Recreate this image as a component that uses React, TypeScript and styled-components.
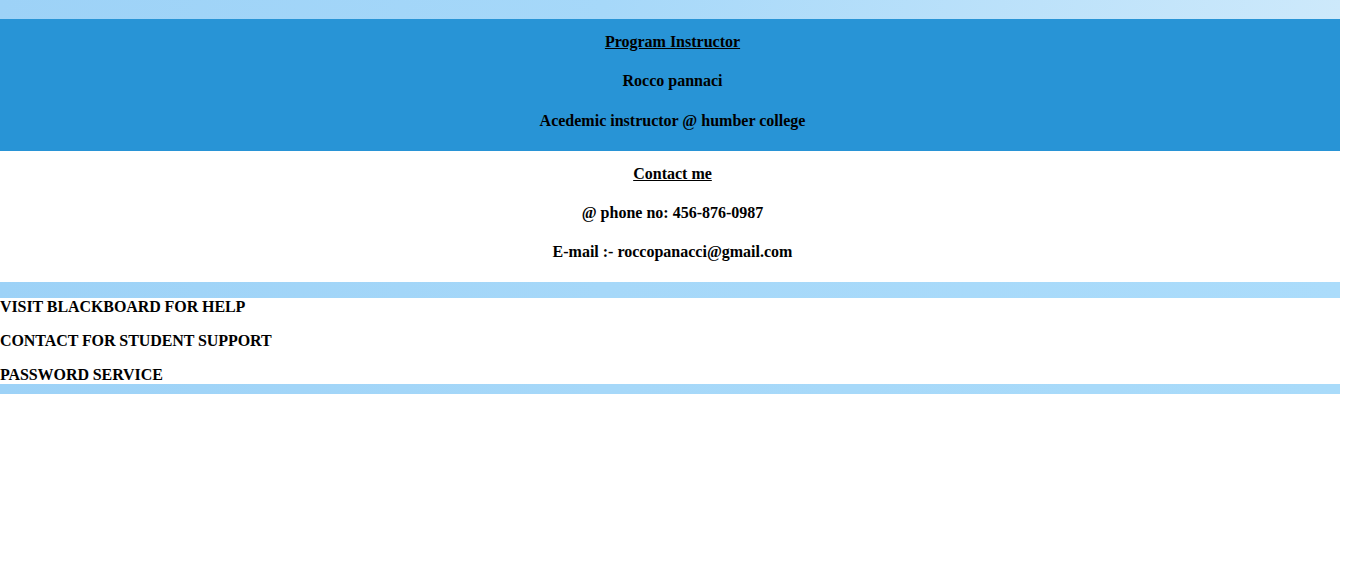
import React from "react";
import styled, { createGlobalStyle } from "styled-components";

const GlobalStyle = createGlobalStyle`
  html, body {
    margin: 0;
    padding: 0;
    background: #ffffff;
  }
  body {
    font-family: "Liberation Serif", "Times New Roman", serif;
    color: #000000;
  }
`;

const Page = styled.div`
  width: 1340px;
  display: flex;
  flex-direction: column;
`;

const GradientBar = styled.div<{ $height: number; $to: string }>`
  height: ${(p) => p.$height}px;
  background: linear-gradient(100deg, #9dd2f7 0%, #a6d8f9 45%, ${(p) => p.$to} 100%);
`;

const InfoSection = styled.section<{ $bg: string; $top: number; $bottom: number }>`
  display: flow-root;
  background: ${(p) => p.$bg};
  text-align: center;
  padding: ${(p) => p.$top}px 0 ${(p) => p.$bottom}px 5px;
`;

const Line = styled.h4`
  margin: 0 0 21.28px;
  font-size: 16px;
  font-weight: bold;
  line-height: normal;
  &:last-child {
    margin-bottom: 0;
  }
`;

const Underlined = styled.span`
  text-decoration: underline;
`;

const LinkList = styled.div`
  display: flex;
  flex-direction: column;
  gap: 16px;
`;

const LinkItem = styled.p`
  margin: 0;
  font-size: 16px;
  font-weight: bold;
  line-height: normal;
  letter-spacing: -0.08px;
`;

export default function App() {
  return (
    <>
      <GlobalStyle />
      <Page>
        <GradientBar $height={19} $to="#cde9fb" />
        <InfoSection $bg="#2894d6" $top={14} $bottom={21}>
          <Line>
            <Underlined>Program Instructor</Underlined>
          </Line>
          <Line>Rocco pannaci</Line>
          <Line>Acedemic instructor @ humber college</Line>
        </InfoSection>
        <InfoSection $bg="#ffffff" $top={14} $bottom={21}>
          <Line>
            <Underlined>Contact me</Underlined>
          </Line>
          <Line>@ phone no: 456-876-0987</Line>
          <Line>E-mail :- roccopanacci@gmail.com</Line>
        </InfoSection>
        <GradientBar $height={16} $to="#abdcfb" />
        <LinkList>
          <LinkItem>VISIT BLACKBOARD FOR HELP</LinkItem>
          <LinkItem>CONTACT FOR STUDENT SUPPORT</LinkItem>
          <LinkItem>PASSWORD SERVICE</LinkItem>
        </LinkList>
        <GradientBar $height={10} $to="#a9dbfa" />
      </Page>
    </>
  );
}
